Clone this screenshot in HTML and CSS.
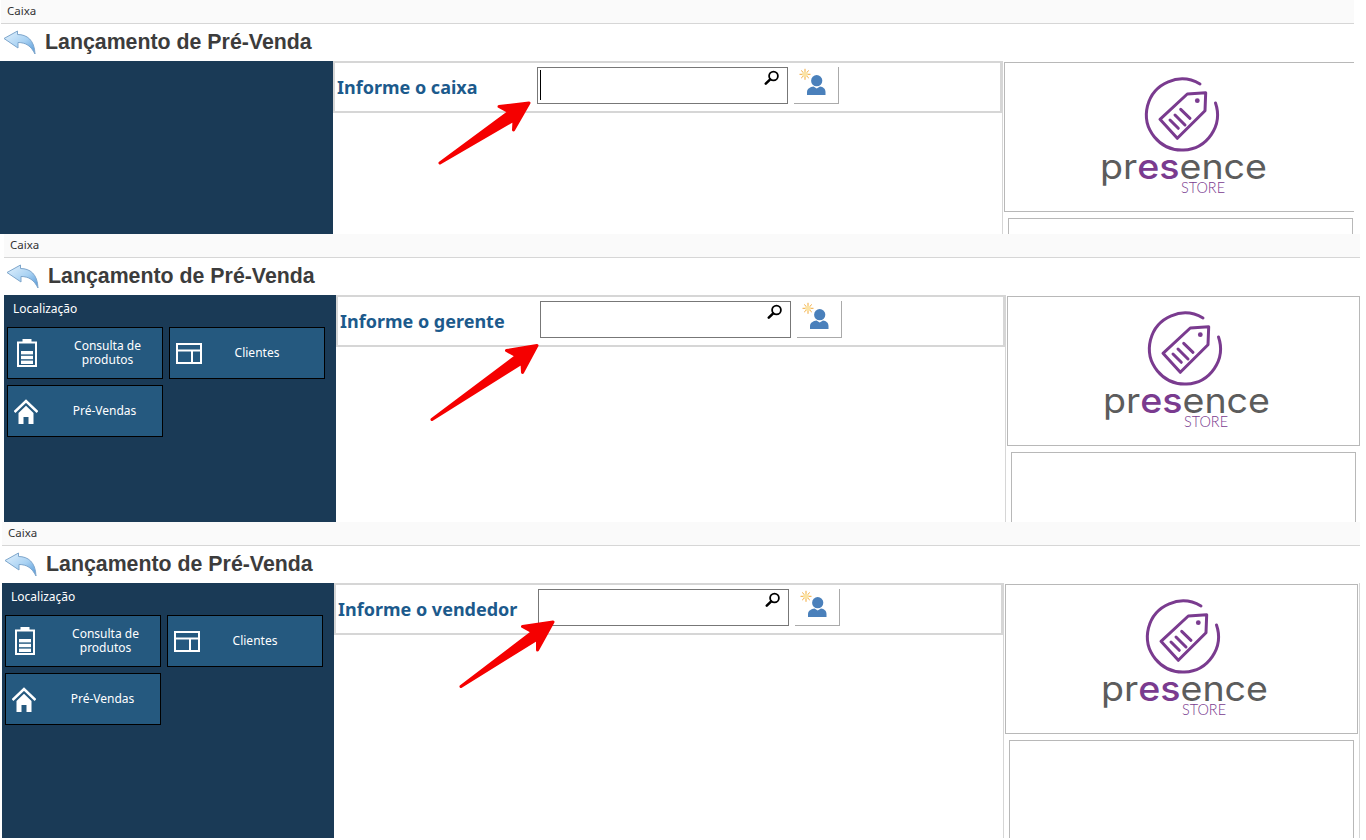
FILE: index.html
```html
<!DOCTYPE html>
<html lang="en">
<head>
    <meta charset="UTF-8">
    <title>Lançamento de Pré-Venda</title>
    <link rel="stylesheet" href="styles.css">
</head>
<body>
    <svg class="defs" width="0" height="0">
        <defs>
            <linearGradient id="backFill" x1="0" y1="0" x2="1" y2="1">
                <stop offset="0" stop-color="#e4f2fd"/>
                <stop offset="0.55" stop-color="#a9d2f3"/>
                <stop offset="1" stop-color="#4f94d6"/>
            </linearGradient>
            <symbol id="back" viewBox="0 0 36 28">
                <path d="M4 10.5 L17.5 3 V6.5 C27 6.5 34.5 12 35 26 C31 18 26 14.5 18 14.5 V20 Z" fill="url(#backFill)" stroke="#7ea6cc" stroke-width="1" stroke-linejoin="round"/>
            </symbol>
            <symbol id="person" viewBox="0 0 36 37">
                <g transform="translate(5 1.3)">
                    <path d="M6 0.5 V11.5 M0.5 6 H11.5 M2.2 2.2 L9.8 9.8 M9.8 2.2 L2.2 9.8" stroke="#f2a93b" stroke-width="1"/>
                    <circle cx="6" cy="6" r="2.8" fill="#fbe3a6"/>
                </g>
                <circle cx="22.7" cy="13.7" r="5.6" fill="#4a80bb"/>
                <path d="M13 28 V25 C13 21.5 16.5 20 19.5 19.5 L22.7 21.5 L26 19.5 C29 20 31.5 21.5 31.5 25 V28 Z" fill="#4a80bb"/>
            </symbol>
            <symbol id="lens" viewBox="0 0 16 16">
                <circle cx="9.5" cy="6" r="4.4" fill="none" stroke="#000" stroke-width="1.8"/>
                <path d="M6.2 9.4 L1.8 13.6" stroke="#000" stroke-width="2.6" stroke-linecap="round"/>
            </symbol>
            <symbol id="battery" viewBox="0 0 20 28">
                <rect x="5.5" y="0" width="9" height="3.5" fill="#fff"/>
                <rect x="1" y="3.5" width="18" height="23.5" fill="none" stroke="#fff" stroke-width="2"/>
                <rect x="4" y="12" width="12" height="3.4" fill="#fff"/>
                <rect x="4" y="16.8" width="12" height="3.4" fill="#fff"/>
                <rect x="4" y="21.6" width="12" height="3.4" fill="#fff"/>
            </symbol>
            <symbol id="layout" viewBox="0 0 26 21">
                <rect x="1" y="1" width="24" height="19" fill="none" stroke="#fff" stroke-width="2"/>
                <path d="M1 7.5 H25 M16 7.5 V20" stroke="#fff" stroke-width="2"/>
            </symbol>
            <symbol id="home" viewBox="0 0 24 25">
                <path d="M0.5 13 L12 2 L23.5 13" fill="none" stroke="#fff" stroke-width="2.6"/>
                <path d="M4.5 14 L12 6.8 L19.5 14 V25 H14.5 V18 H9.5 V25 H4.5 Z" fill="#fff"/>
            </symbol>
            <symbol id="logo" viewBox="0 0 190 130">
                <path d="M110 14 A35.5 35.5 0 1 0 125.5 33" fill="none" stroke="#7a3b8f" stroke-width="3" stroke-linecap="round"/>
                <path d="M115.7 22.7 L97.3 24 L70 49.3 L87.3 68.3 L115 40.7 Z" fill="none" stroke="#7a3b8f" stroke-width="3" stroke-linejoin="round"/>
                <circle cx="107.3" cy="30.7" r="2.4" fill="#7a3b8f"/>
                <path d="M80 50 L88.3 58.3 M85 45 L95 55 M90.7 39.3 L100 48.3" stroke="#7a3b8f" stroke-width="3" stroke-linecap="round"/>
                <text class="logo-name" x="10" y="108.5" textLength="167" lengthAdjust="spacingAndGlyphs"><tspan fill="#5c5c5c">pr</tspan><tspan class="logo-accent">es</tspan><tspan fill="#5c5c5c">ence</tspan></text>
                <text class="logo-store" x="91" y="123" textLength="44" lengthAdjust="spacingAndGlyphs">STORE</text>
            </symbol>
        </defs>
    </svg>

    <div class="page">
        <section class="shot shot-one">
            <div class="topbar">Caixa</div>
            <header class="title-row">
                <svg class="back-icon"><use href="#back"/></svg>
                <h1>Lançamento de Pré-Venda</h1>
            </header>
            <div class="shot-body">
                <aside class="sidebar"></aside>
                <div class="form-box">
                    <label class="form-label">Informe o caixa</label>
                    <div class="search-input">
                        <span class="caret"></span>
                        <svg class="lens"><use href="#lens"/></svg>
                    </div>
                    <button class="add-btn"><svg class="person"><use href="#person"/></svg></button>
                </div>
                <div class="right-col">
                    <div class="logo-box"><svg class="logo"><use href="#logo"/></svg></div>
                    <div class="info-box"></div>
                </div>
            </div>
        </section>

        <section class="shot shot-two">
            <div class="topbar">Caixa</div>
            <header class="title-row">
                <svg class="back-icon"><use href="#back"/></svg>
                <h1>Lançamento de Pré-Venda</h1>
            </header>
            <div class="shot-body">
                <aside class="sidebar">
                    <div class="side-title">Localização</div>
                    <div class="tiles">
                        <a class="tile tile-products"><svg class="ic-battery"><use href="#battery"/></svg><span>Consulta de produtos</span></a>
                        <a class="tile tile-clients"><svg class="ic-layout"><use href="#layout"/></svg><span>Clientes</span></a>
                        <a class="tile tile-sales"><svg class="ic-home"><use href="#home"/></svg><span>Pré-Vendas</span></a>
                    </div>
                </aside>
                <div class="form-box">
                    <label class="form-label">Informe o gerente</label>
                    <div class="search-input">
                        <svg class="lens"><use href="#lens"/></svg>
                    </div>
                    <button class="add-btn"><svg class="person"><use href="#person"/></svg></button>
                </div>
                <div class="right-col">
                    <div class="logo-box"><svg class="logo"><use href="#logo"/></svg></div>
                    <div class="info-box"></div>
                </div>
            </div>
        </section>

        <section class="shot shot-three">
            <div class="topbar">Caixa</div>
            <header class="title-row">
                <svg class="back-icon"><use href="#back"/></svg>
                <h1>Lançamento de Pré-Venda</h1>
            </header>
            <div class="shot-body">
                <aside class="sidebar">
                    <div class="side-title">Localização</div>
                    <div class="tiles">
                        <a class="tile tile-products"><svg class="ic-battery"><use href="#battery"/></svg><span>Consulta de produtos</span></a>
                        <a class="tile tile-clients"><svg class="ic-layout"><use href="#layout"/></svg><span>Clientes</span></a>
                        <a class="tile tile-sales"><svg class="ic-home"><use href="#home"/></svg><span>Pré-Vendas</span></a>
                    </div>
                </aside>
                <div class="form-box">
                    <label class="form-label">Informe o vendedor</label>
                    <div class="search-input">
                        <svg class="lens"><use href="#lens"/></svg>
                    </div>
                    <button class="add-btn"><svg class="person"><use href="#person"/></svg></button>
                </div>
                <div class="right-col">
                    <div class="logo-box"><svg class="logo"><use href="#logo"/></svg></div>
                    <div class="info-box"></div>
                </div>
            </div>
        </section>

        <!-- red annotation arrows drawn over the three screens -->
        <svg class="arrows" width="1366" height="840">
            <g fill="#f50000" stroke="#f50000" stroke-width="3" stroke-linejoin="round">
                <path d="M529 103 L499 106.5 L509 112 L440 163 L514 120 L513.5 130 Z"/>
                <path d="M537 345.5 L506.5 350.5 L516.5 356 L432 419.5 L522 363 L522.5 372.5 Z"/>
                <path d="M553 622 L522.5 626.5 L532.5 632 L461 686.5 L537.5 639 L537.5 650 Z"/>
            </g>
        </svg>
    </div>
</body>
</html>
```

FILE: styles.css
```css
* {
    margin: 0;
    padding: 0;
    box-sizing: border-box;
}

body {
    background: #fff;
    font-family: 'Noto Sans', sans-serif;
}

.defs {
    position: absolute;
}

.page {
    position: relative;
    width: 1366px;
    height: 840px;
    overflow: hidden;
}

.arrows {
    position: absolute;
    top: 0;
    left: 0;
}

/* each screen is a cropped capture, so height and side offset differ */
.shot {
    overflow: hidden;
    background: #fff;
}

.shot-one {
    width: 1354px;
    height: 234px;
}

.shot-two {
    width: 1357px;
    height: 288px;
    margin-left: 3px;
}

.shot-three {
    width: 1359px;
    height: 316px;
    margin-left: 1px;
}

.topbar {
    height: 24px;
    margin-left: 1px;
    padding-left: 6px;
    background: #fafafa;
    border-bottom: 1px solid #d6d6d6;
    color: #333;
    font-size: 11.5px;
    line-height: 21px;
}

.title-row {
    display: flex;
    align-items: center;
    height: 36px;
}

.back-icon {
    width: 36px;
    height: 28px;
    margin-right: 9px;
}

.title-row h1 {
    font-family: 'Liberation Sans', Arial, sans-serif;
    font-size: 21.33px;
    font-weight: 700;
    color: #3c3c3c;
}

.shot-body {
    display: grid;
    grid-template-columns: 333px 669px 1fr;
    align-items: start;
    margin-top: 1px;
}

.sidebar {
    height: 260px;
    margin-left: 1px;
    background: #1a3a56;
}

.shot-one .sidebar {
    margin-left: 0;
}

.side-title {
    height: 32px;
    padding-left: 9px;
    color: #fff;
    font-size: 12px;
    line-height: 28px;
}

.tiles {
    display: grid;
    grid-template-columns: 156px 156px;
    grid-auto-rows: 52px;
    gap: 6px;
    padding-left: 3px;
}

.tile {
    display: flex;
    align-items: center;
    background: #25597f;
    border: 1px solid #000;
    color: #fff;
    font-size: 12px;
    line-height: 14px;
    text-align: center;
}

.tile span {
    flex: 1;
}

.tile-products span {
    padding-left: 16px;
}

.tile-clients span {
    padding-right: 12px;
}

.tile-sales span {
    padding-left: 9px;
}

.ic-battery {
    width: 20px;
    height: 28px;
    margin-left: 9px;
}

.ic-layout {
    width: 26px;
    height: 21px;
    margin-left: 6px;
}

.ic-home {
    width: 24px;
    height: 25px;
    margin-left: 6px;
}

.form-box {
    display: flex;
    align-items: flex-start;
    height: 52px;
    padding: 4px 0 0 2px;
    border: 2px solid #d6d6d6;
}

.form-label {
    width: 200px;
    color: #1c5a8c;
    font-size: 18px;
    font-weight: 700;
    line-height: 40px;
}

.search-input {
    display: flex;
    justify-content: space-between;
    width: 251px;
    height: 37px;
    padding: 2px 7px 0 2px;
    border: 1px solid #777;
    background: #fff;
}

.caret {
    width: 1px;
    height: 30px;
    background: #000;
}

.lens {
    width: 16px;
    height: 16px;
    margin-left: auto;
}

.add-btn {
    display: block;
    width: 45px;
    height: 37px;
    margin-left: 6px;
    background: #fff;
    border: 0;
    border-right: 1px solid #aaa;
    border-bottom: 1px solid #aaa;
}

.person {
    display: block;
    width: 36px;
    height: 37px;
}

.right-col {
    height: 260px;
    padding: 1px 0 0 1px;
    border-left: 1px solid #d6d6d6;
    border-right: 1px solid #d6d6d6;
}

.logo-box {
    width: 353px;
    height: 150px;
    padding: 7px 0 0 85px;
    border: 1px solid #b8b8b8;
}

.logo {
    display: block;
    width: 190px;
    height: 130px;
}

.logo-name {
    font-family: 'Inter', sans-serif;
    font-size: 35px;
}

.logo-accent {
    fill: #7a3b8f;
    font-weight: 500;
}

.logo-store {
    font-family: 'Lato', sans-serif;
    font-size: 16px;
    font-weight: 300;
    fill: #7a3b8f;
}

.info-box {
    width: 345px;
    height: 240px;
    margin: 6px 0 0 4px;
    border: 1px solid #b8b8b8;
}
```
